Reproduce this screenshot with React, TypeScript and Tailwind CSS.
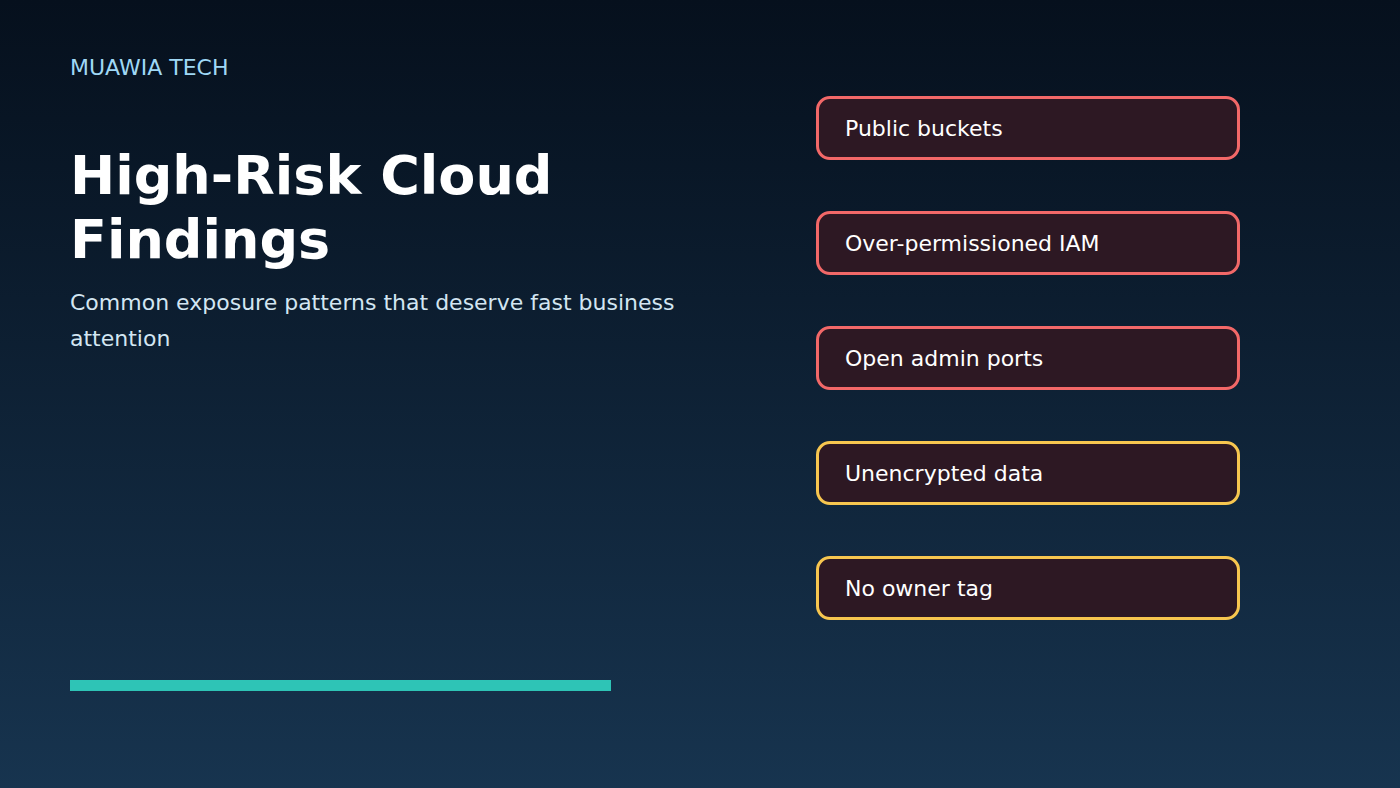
export default function App() {
  const items = [
    { t: "Public buckets", c: "border-[#f26868]" },
    { t: "Over-permissioned IAM", c: "border-[#f26868]" },
    { t: "Open admin ports", c: "border-[#f26868]" },
    { t: "Unencrypted data", c: "border-[#f7c64f]" },
    { t: "No owner tag", c: "border-[#f7c64f]" },
  ];
  return (
    <div
      className="w-[1400px] h-[788px] overflow-hidden bg-gradient-to-b from-[#06101d] to-[#17344f] flex items-start px-[70px] pt-[55px]"
      style={{ fontFamily: '"DejaVu Sans", sans-serif' }}
    >
      <div className="w-[746px] flex flex-col shrink-0">
        <div className="text-[22px] leading-[26px] text-[#9fd8f5]">MUAWIA TECH</div>
        <h1 className="mt-[63px] text-[54px] leading-[64px] font-bold text-white">
          High-Risk Cloud
          <br />
          Findings
        </h1>
        <p className="mt-[13px] text-[22px] leading-[36px] text-[#d3e6f2] w-[690px]">
          Common exposure patterns that deserve fast business attention
        </p>
        <div className="mt-[323px] w-[541px] h-[11px] bg-[#2ec4b6]" />
      </div>
      <div className="mt-[41px] flex flex-col gap-[51px]">
        {items.map((i) => (
          <div
            key={i.t}
            className={`w-[424px] h-[64px] rounded-[14px] border-[3px] ${i.c} bg-[#2d1823] flex items-center pl-[26px] text-[22px] text-white`}
          >
            {i.t}
          </div>
        ))}
      </div>
    </div>
  );
}
